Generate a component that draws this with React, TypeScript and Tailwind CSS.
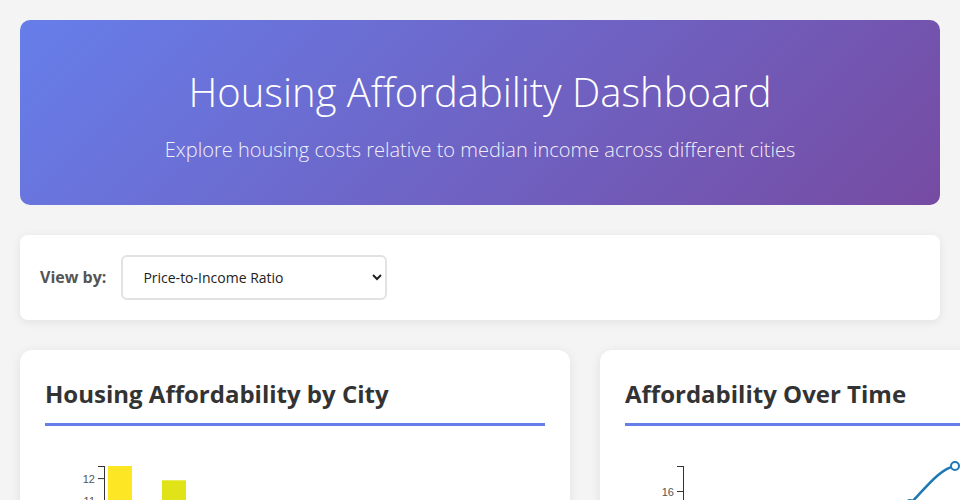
import { useState } from 'react';

const cityData = [
    { city: 'San Francisco', value: 12.55, color: '#fde725' },
    { city: 'Los Angeles', value: 11.9, color: '#dfe318' },
    { city: 'New York', value: 10.4, color: '#a0da39' },
    { city: 'Seattle', value: 9.6, color: '#5ec962' },
    { city: 'Boston', value: 8.8, color: '#2db27d' },
    { city: 'Denver', value: 7.9, color: '#21918c' },
    { city: 'Chicago', value: 6.1, color: '#3b528b' },
    { city: 'Houston', value: 4.9, color: '#440154' },
];

// points in svg coords (svg top is 20px below the heading rule)
const trend: [number, number][] = [
    [105, 232], [150, 196], [195, 158], [240, 112], [285, 58], [330, 20],
];

// smooth path through points, roughly like d3.curveMonotoneX
const smoothPath = (pts: [number, number][]) => {
    const n = pts.length;
    const slopes = pts.slice(1).map((p, i) => (p[1] - pts[i][1]) / (p[0] - pts[i][0]));
    const tangents = pts.map((_, i) => {
        if (i === 0) return slopes[0];
        if (i === n - 1) return slopes[n - 2];
        const a = slopes[i - 1];
        const b = slopes[i];
        return a * b <= 0 ? 0 : (a + b) / 2;
    });
    tangents[n - 1] = 0.2 * slopes[n - 2];
    let d = `M${pts[0][0]},${pts[0][1]}`;
    for (let i = 0; i < n - 1; i++) {
        const [x0, y0] = pts[i];
        const [x1, y1] = pts[i + 1];
        const dx = (x1 - x0) / 3;
        d += ` C${x0 + dx},${y0 + tangents[i] * dx} ${x1 - dx},${y1 - tangents[i + 1] * dx} ${x1},${y1}`;
    }
    return d;
};

const BarChart = () => {
    const top = 20;
    const unit = 22;
    const max = 12.55;
    const height = max * unit;
    const y = (v: number) => top + (max - v) * unit;
    const ticks = [12, 11, 10, 9, 8, 7, 6, 5, 4, 3, 2, 1, 0];

    return (
        <svg width={500} height={340} className="block">
            <line x1={59.5} y1={top} x2={59.5} y2={top + height} stroke="#333" strokeWidth={1} />
            <line x1={53} y1={top + 0.5} x2={60} y2={top + 0.5} stroke="#333" strokeWidth={1} />
            {ticks.map((t) => (
                <g key={t}>
                    <line x1={53} y1={y(t) + 0.5} x2={60} y2={y(t) + 0.5} stroke="#333" strokeWidth={1} />
                    <text x={50} y={y(t) + 4.5} textAnchor="end" fontSize={11} fill="#555" fontFamily="'Liberation Sans', Arial, sans-serif">
                        {t}
                    </text>
                </g>
            ))}
            {cityData.map((d, i) => (
                <rect key={d.city} x={63 + i * 54} y={y(d.value)} width={24} height={top + height - y(d.value)} fill={d.color} />
            ))}
        </svg>
    );
};

const LineChart = () => (
    <svg width={500} height={340} className="block">
        <line x1={58.5} y1={20} x2={58.5} y2={300} stroke="#333" strokeWidth={1} />
        <line x1={52} y1={20.5} x2={59} y2={20.5} stroke="#333" strokeWidth={1} />
        {[16, 14, 12, 10, 8].map((t, i) => (
            <g key={t}>
                <line x1={52} y1={45.5 + i * 56} x2={59} y2={45.5 + i * 56} stroke="#333" strokeWidth={1} />
                <text x={49} y={49.5 + i * 56} textAnchor="end" fontSize={11} fill="#555" fontFamily="'Liberation Sans', Arial, sans-serif">
                    {t}
                </text>
            </g>
        ))}
        <path d={smoothPath(trend)} fill="none" stroke="#1f77b4" strokeWidth={2.5} />
        {trend.map(([cx, cy]) => (
            <circle key={cx} cx={cx} cy={cy} r={4} fill="#fff" stroke="#1f77b4" strokeWidth={2} />
        ))}
    </svg>
);

const Card = ({ title, children }: { title: string; children: React.ReactNode }) => (
    <div className="w-[550px] shrink-0 rounded-xl bg-white p-[25px] shadow-[0_2px_12px_rgba(0,0,0,0.08)]">
        <h2 className="border-b-[3px] border-[#667eea] pb-[10px] text-[24px] font-bold leading-[38px] text-[#333]">
            {title}
        </h2>
        <div className="mt-5">{children}</div>
    </div>
);

const App = () => {
    const [view, setView] = useState('ratio');

    return (
        <div className="min-h-screen overflow-x-hidden bg-[#f4f4f4] p-5 font-['Open_Sans',sans-serif] leading-[1.6]">
            <header className="rounded-[10px] bg-[linear-gradient(135deg,#667eea_0%,#764ba2_100%)] px-5 py-10 text-center text-white">
                <h1 className="mb-[10px] text-[40px] font-light leading-[64px]">Housing Affordability Dashboard</h1>
                <p className="text-[20px] font-light leading-[31px] opacity-90">
                    Explore housing costs relative to median income across different cities
                </p>
            </header>

            <div className="mt-[30px] flex items-center gap-[15px] rounded-lg bg-white p-5 shadow-[0_2px_10px_rgba(0,0,0,0.08)]">
                <label htmlFor="view" className="text-[16px] font-bold text-[#555]">View by:</label>
                <select
                    id="view"
                    value={view}
                    onChange={(e) => setView(e.target.value)}
                    className="h-[45px] w-[266px] rounded-md border-2 border-[#e2e2e2] bg-white pl-4 pr-2 text-[14px] text-[#222]"
                >
                    <option value="ratio">Price-to-Income Ratio</option>
                    <option value="price">Median Home Price</option>
                    <option value="income">Median Income</option>
                </select>
            </div>

            <div className="mt-[30px] flex gap-[30px]">
                <Card title="Housing Affordability by City">
                    <BarChart />
                </Card>
                <Card title="Affordability Over Time">
                    <LineChart />
                </Card>
            </div>
        </div>
    );
};

export default App;
